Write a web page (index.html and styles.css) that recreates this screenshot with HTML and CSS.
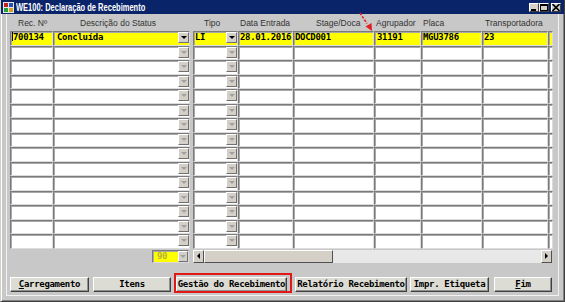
FILE: index.html
```html
<!DOCTYPE html>
<html>
<head>
<meta charset="utf-8">
<link rel="stylesheet" href="styles.css">
</head>
<body>
<div class="win">
  <div class="titlebar">
    <svg class="appicon" width="11" height="11" viewBox="0 0 11 11">
      <rect x="0" y="0" width="11" height="11" fill="#e8e8e8"/>
      <rect x="1" y="1" width="4" height="4" fill="#c02020"/>
      <rect x="6" y="1" width="4" height="4" fill="#2050c0"/>
      <rect x="1" y="6" width="4" height="4" fill="#20a040"/>
      <rect x="6" y="6" width="4" height="4" fill="#d0a020"/>
    </svg>
    <span class="title">WE100: Declaração de Recebimento</span>
    <div class="ctrls">
      <span class="cbtn"><svg width="8" height="7" viewBox="0 0 8 7"><rect x="1" y="5" width="5" height="2" fill="#000"/></svg></span>
      <span class="cbtn"><svg width="8" height="7" viewBox="0 0 8 7"><rect x="0.5" y="0.5" width="7" height="6" fill="none" stroke="#000"/><rect x="0" y="0" width="8" height="2" fill="#000"/></svg></span>
      <span class="cbtn close"><svg width="8" height="7" viewBox="0 0 8 7"><path d="M0.5 0 L7.5 7 M7.5 0 L0.5 7" stroke="#000" stroke-width="1.6"/></svg></span>
    </div>
  </div>

  <div class="client">
    <div class="hdr">
      <div class="h c-rec">Rec. Nº</div>
      <div class="h c-desc">Descrição do Status</div>
      <div class="h c-tipo">Tipo</div>
      <div class="h c-data">Data Entrada</div>
      <div class="h c-stage">Stage/Doca</div>
      <div class="h c-agrup">Agrupador</div>
      <div class="h c-placa">Placa</div>
      <div class="h c-transp">Transportadora</div>
    </div>

    <div class="grid">
      <div class="row active">
        <div class="cell c-rec"><span class="caret"></span>700134</div>
        <div class="cell c-desc">Concluída<span class="dd"><i></i></span></div>
        <div class="cell c-tipo">LI<span class="dd"><i></i></span></div>
        <div class="cell c-data">28.01.2016</div>
        <div class="cell c-stage">DOCD001</div>
        <div class="cell c-agrup">31191</div>
        <div class="cell c-placa">MGU3786</div>
        <div class="cell c-transp">23</div>
        <div class="cell c-sliver"></div>
      </div>
      <div class="row"><div class="cell c-rec"></div><div class="cell c-desc"><span class="dd"><i></i></span></div><div class="cell c-tipo"><span class="dd"><i></i></span></div><div class="cell c-data"></div><div class="cell c-stage"></div><div class="cell c-agrup"></div><div class="cell c-placa"></div><div class="cell c-transp"></div><div class="cell c-sliver"></div></div>
      <div class="row"><div class="cell c-rec"></div><div class="cell c-desc"><span class="dd"><i></i></span></div><div class="cell c-tipo"><span class="dd"><i></i></span></div><div class="cell c-data"></div><div class="cell c-stage"></div><div class="cell c-agrup"></div><div class="cell c-placa"></div><div class="cell c-transp"></div><div class="cell c-sliver"></div></div>
      <div class="row"><div class="cell c-rec"></div><div class="cell c-desc"><span class="dd"><i></i></span></div><div class="cell c-tipo"><span class="dd"><i></i></span></div><div class="cell c-data"></div><div class="cell c-stage"></div><div class="cell c-agrup"></div><div class="cell c-placa"></div><div class="cell c-transp"></div><div class="cell c-sliver"></div></div>
      <div class="row"><div class="cell c-rec"></div><div class="cell c-desc"><span class="dd"><i></i></span></div><div class="cell c-tipo"><span class="dd"><i></i></span></div><div class="cell c-data"></div><div class="cell c-stage"></div><div class="cell c-agrup"></div><div class="cell c-placa"></div><div class="cell c-transp"></div><div class="cell c-sliver"></div></div>
      <div class="row"><div class="cell c-rec"></div><div class="cell c-desc"><span class="dd"><i></i></span></div><div class="cell c-tipo"><span class="dd"><i></i></span></div><div class="cell c-data"></div><div class="cell c-stage"></div><div class="cell c-agrup"></div><div class="cell c-placa"></div><div class="cell c-transp"></div><div class="cell c-sliver"></div></div>
      <div class="row"><div class="cell c-rec"></div><div class="cell c-desc"><span class="dd"><i></i></span></div><div class="cell c-tipo"><span class="dd"><i></i></span></div><div class="cell c-data"></div><div class="cell c-stage"></div><div class="cell c-agrup"></div><div class="cell c-placa"></div><div class="cell c-transp"></div><div class="cell c-sliver"></div></div>
      <div class="row"><div class="cell c-rec"></div><div class="cell c-desc"><span class="dd"><i></i></span></div><div class="cell c-tipo"><span class="dd"><i></i></span></div><div class="cell c-data"></div><div class="cell c-stage"></div><div class="cell c-agrup"></div><div class="cell c-placa"></div><div class="cell c-transp"></div><div class="cell c-sliver"></div></div>
      <div class="row"><div class="cell c-rec"></div><div class="cell c-desc"><span class="dd"><i></i></span></div><div class="cell c-tipo"><span class="dd"><i></i></span></div><div class="cell c-data"></div><div class="cell c-stage"></div><div class="cell c-agrup"></div><div class="cell c-placa"></div><div class="cell c-transp"></div><div class="cell c-sliver"></div></div>
      <div class="row"><div class="cell c-rec"></div><div class="cell c-desc"><span class="dd"><i></i></span></div><div class="cell c-tipo"><span class="dd"><i></i></span></div><div class="cell c-data"></div><div class="cell c-stage"></div><div class="cell c-agrup"></div><div class="cell c-placa"></div><div class="cell c-transp"></div><div class="cell c-sliver"></div></div>
      <div class="row"><div class="cell c-rec"></div><div class="cell c-desc"><span class="dd"><i></i></span></div><div class="cell c-tipo"><span class="dd"><i></i></span></div><div class="cell c-data"></div><div class="cell c-stage"></div><div class="cell c-agrup"></div><div class="cell c-placa"></div><div class="cell c-transp"></div><div class="cell c-sliver"></div></div>
      <div class="row"><div class="cell c-rec"></div><div class="cell c-desc"><span class="dd"><i></i></span></div><div class="cell c-tipo"><span class="dd"><i></i></span></div><div class="cell c-data"></div><div class="cell c-stage"></div><div class="cell c-agrup"></div><div class="cell c-placa"></div><div class="cell c-transp"></div><div class="cell c-sliver"></div></div>
      <div class="row"><div class="cell c-rec"></div><div class="cell c-desc"><span class="dd"><i></i></span></div><div class="cell c-tipo"><span class="dd"><i></i></span></div><div class="cell c-data"></div><div class="cell c-stage"></div><div class="cell c-agrup"></div><div class="cell c-placa"></div><div class="cell c-transp"></div><div class="cell c-sliver"></div></div>
      <div class="row"><div class="cell c-rec"></div><div class="cell c-desc"><span class="dd"><i></i></span></div><div class="cell c-tipo"><span class="dd"><i></i></span></div><div class="cell c-data"></div><div class="cell c-stage"></div><div class="cell c-agrup"></div><div class="cell c-placa"></div><div class="cell c-transp"></div><div class="cell c-sliver"></div></div>
      <div class="row"><div class="cell c-rec"></div><div class="cell c-desc"><span class="dd"><i></i></span></div><div class="cell c-tipo"><span class="dd"><i></i></span></div><div class="cell c-data"></div><div class="cell c-stage"></div><div class="cell c-agrup"></div><div class="cell c-placa"></div><div class="cell c-transp"></div><div class="cell c-sliver"></div></div>
    </div>

    <div class="under">
      <div class="cell small">90<span class="dd"><i></i></span></div>
      <div class="hscroll">
        <span class="sbtn"><i class="tl"></i></span>
        <span class="thumb"></span>
        <span class="track"></span>
        <span class="sbtn"><i class="tr"></i></span>
      </div>
    </div>

    <div class="buttons">
      <div class="btn b1"><u>C</u>arregamento</div>
      <div class="btn b2">Itens</div>
      <div class="btn b3">Gestão do Recebimento</div>
      <div class="btn b4">Relatório Recebimento</div>
      <div class="btn b5">Impr. Etiqueta</div>
      <div class="btn b6"><u>F</u>im</div>
    </div>
  </div>

  <div class="mark"></div>
  <svg class="arrow" width="24" height="24" viewBox="0 0 24 24">
    <path d="M2 1 L9 11.5" stroke="#e02020" stroke-width="1.6" stroke-dasharray="2.5 1.5" fill="none"/>
    <path d="M14 19 L7.5 14.5 L13.5 11 Z" fill="#e02020"/>
  </svg>
</div>
</body>
</html>
```

FILE: styles.css
```css
* { box-sizing: border-box; }

body {
  margin: 0;
  background: #c8c8c8;
  font-family: "Liberation Sans", Arial, sans-serif;
}

.win {
  position: relative;
  width: 565px;
  height: 302px;
  background: #c8c8c8;
  border-style: solid;
  border-width: 0 1px 1px 1px;
  border-color: #d4d0c8 #404040 #404040 #d4d0c8;
  box-shadow: inset 1px 0 0 #ffffff, inset -1px -1px 0 #808080;
  display: flex;
  flex-direction: column;
}

.titlebar {
  flex: none;
  height: 14px;
  background: #0a246a;
  display: flex;
  align-items: center;
  padding-left: 2px;
}

.appicon { flex: none; }

.title {
  margin-left: 2px;
  color: #fff;
  font: bold 10px "Liberation Sans", Arial, sans-serif;
  white-space: nowrap;
  transform: scaleX(0.75);
  transform-origin: left center;
}

.ctrls {
  margin-left: auto;
  margin-right: 3px;
  display: flex;
}

.cbtn {
  width: 10px;
  height: 9px;
  background: #d4d0c8;
  border: 1px solid;
  border-color: #fff #404040 #404040 #fff;
  display: flex;
  align-items: center;
  justify-content: center;
}
.cbtn svg { display: block; }
.cbtn.close { margin-left: 2px; }

.client {
  flex: 1;
  margin: 0 5px 5px 5px;
  padding-left: 3px;
  border-style: solid;
  border-width: 0 1px 1px 1px;
  border-color: #f2f2f2;
}

/* header */
.hdr {
  display: flex;
  height: 17px;
  align-items: flex-end;
  padding-bottom: 3px;
}
.h {
  font-size: 8.5px;
  color: #333;
  white-space: nowrap;
  line-height: 10px;
}

/* column widths */
.c-rec { width: 43px; }
.c-desc { width: 137px; margin-right: 3px; }
.c-tipo { width: 45px; }
.c-data { width: 55px; }
.c-stage { width: 81px; }
.c-agrup { width: 47px; }
.c-placa { width: 61px; }
.c-transp { width: 66px; }
.c-sliver { width: 5px; }

.h.c-rec { padding-left: 8px; }
.h.c-desc { padding-left: 27px; }
.h.c-tipo { padding-left: 11px; }
.h.c-data { padding-left: 2px; }
.h.c-stage { padding-left: 23px; }
.h.c-agrup { padding-left: 2px; }
.h.c-placa { padding-left: 2px; }
.h.c-transp { padding-left: 3px; }

/* grid */
.grid {
  display: grid;
  grid-template-rows: repeat(15, 14.5px);
}
.row {
  display: flex;
}
.cell {
  position: relative;
  height: 100%;
  background: #fff;
  border-style: solid;
  border-width: 1px;
  border-color: #7a7a7a #dcdcdc #dcdcdc #7a7a7a;
  box-shadow: inset 1px 1px 0 #a8a8a8;
  font: bold 9px "DejaVu Sans Mono", monospace;
  letter-spacing: -0.3px;
  color: #000;
  padding-left: 1px;
  line-height: 11px;
  white-space: nowrap;
  overflow: hidden;
}
.cell.c-desc { padding-left: 3px; }
.cell.c-agrup { padding-left: 2px; }
.row.active .cell { background: #ffff00; }

.caret {
  display: inline-block;
  width: 1px;
  height: 9px;
  background: #000;
  vertical-align: -1px;
  margin-right: 0;
}

.dd {
  position: absolute;
  right: 0;
  top: 0;
  width: 11px;
  height: 11px;
  background: #d4d0c8;
  border: 1px solid;
  border-color: #fff #707070 #707070 #fff;
  display: flex;
  align-items: center;
  justify-content: center;
}
.dd i {
  display: block;
  width: 0;
  height: 0;
  border-left: 3px solid transparent;
  border-right: 3px solid transparent;
  border-top: 3px solid #a0a0a0;
}
.row.active .dd i { border-top-color: #000; }

/* under grid */
.under {
  display: flex;
  height: 13px;
  margin-top: 1px;
}
.cell.small {
  margin-left: 142px;
  width: 37px;
  height: 13px;
  background: #ffff00;
  color: #b4b43c;
  padding-left: 4px;
}
.cell.small .dd { width: 10px; }

.hscroll {
  margin-left: 4px;
  width: 359px;
  height: 13px;
  display: flex;
  background: #e8e8e8;
}
.sbtn {
  flex: none;
  width: 11px;
  height: 13px;
  background: #d4d0c8;
  border: 1px solid;
  border-color: #fff #505050 #505050 #fff;
  display: flex;
  align-items: center;
  justify-content: center;
}
.sbtn i { display: block; width: 0; height: 0; border-top: 3px solid transparent; border-bottom: 3px solid transparent; }
.sbtn i.tl { border-right: 3px solid #000; }
.sbtn i.tr { border-left: 3px solid #000; }
.thumb {
  flex: none;
  width: 129px;
  height: 13px;
  background: #d4d0c8;
  border: 1px solid;
  border-color: #fff #505050 #505050 #fff;
}
.track { flex: 1; }

/* buttons */
.buttons {
  display: flex;
  margin-top: 14px;
  height: 15px;
}
.btn {
  height: 15px;
  background: #dcdcd4;
  border: 1px solid;
  border-color: #fff #404040 #404040 #fff;
  box-shadow: inset -1px -1px 0 #909090;
  font: bold 9px "DejaVu Sans Mono", monospace;
  letter-spacing: -0.3px;
  color: #000;
  text-align: center;
  line-height: 12px;
  white-space: nowrap;
}
.btn u { text-decoration: underline; }
.b1 { width: 79px; }
.b2 { width: 78px; margin-left: 4px; }
.b3 { width: 111px; margin-left: 5px; }
.b4 { width: 112px; margin-left: 8px; }
.b5 { width: 79px; margin-left: 3px; }
.b6 { width: 58px; margin-left: 5px; }

/* annotation overlays */
.mark {
  position: absolute;
  left: 173px;
  top: 273px;
  width: 118px;
  height: 20px;
  border: 2px solid #e01818;
}
.arrow {
  position: absolute;
  left: 357px;
  top: 12px;
}
```
